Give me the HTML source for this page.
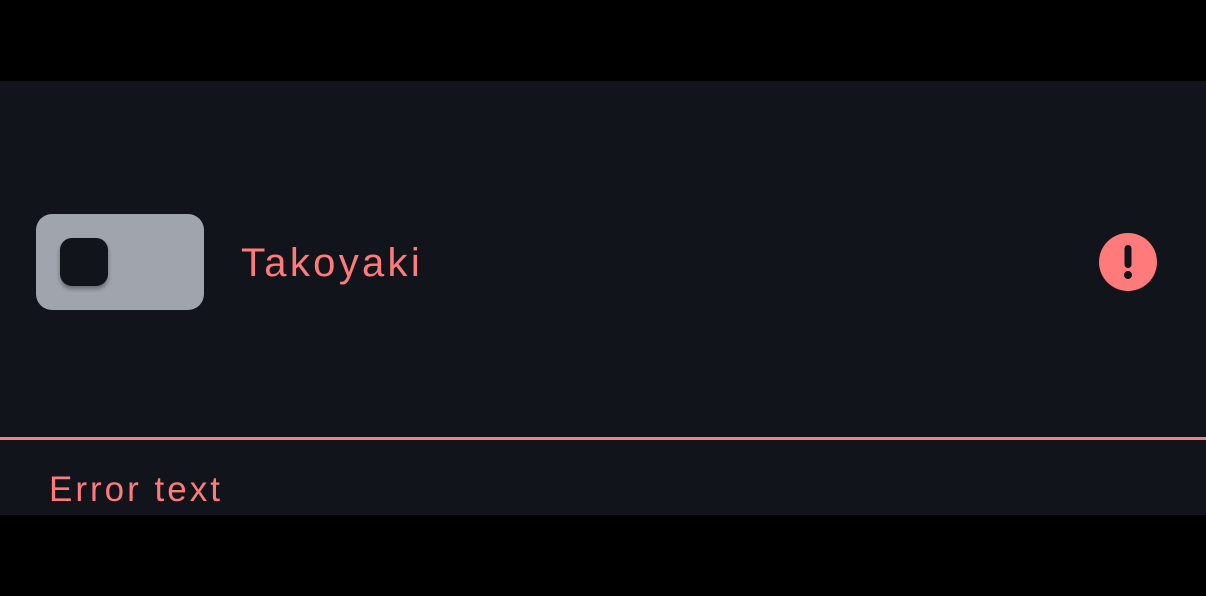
<!DOCTYPE html>
<html><head><meta charset="utf-8"><style>
html,body{margin:0;padding:0;background:#000;width:1206px;height:596px;overflow:hidden}
.panel{position:absolute;left:0;top:81px;width:1206px;height:434px;background:#11141b}
.track{position:absolute;left:36px;top:214px;width:168px;height:96px;border-radius:16px;background:#a0a4ac}
.thumb{position:absolute;left:60px;top:238px;width:48px;height:48px;border-radius:12px;background:#11141b;box-shadow:0 3px 4px rgba(0,0,0,.35)}
.t{position:absolute;font-family:"Liberation Sans",sans-serif;color:#ff7b7b;white-space:nowrap}
.line{position:absolute;left:0;top:437px;width:1206px;height:3px;background:#ff7b7b}
</style></head><body>
<div class="panel"></div>
<div class="track"></div>
<div class="thumb"></div>
<div class="t" style="left:241px;top:241px;font-size:40px;letter-spacing:3.3px">Takoyaki</div>
<svg style="position:absolute;left:1099px;top:233px" width="58" height="58" viewBox="0 0 58 58">
<circle cx="29" cy="29" r="29" fill="#ff7b7b"/>
<rect x="25.5" y="12" width="7" height="23" rx="3.5" fill="#11141b"/>
<circle cx="29" cy="42" r="4" fill="#11141b"/>
</svg>
<div class="line"></div>
<div class="t" style="left:49px;top:470px;font-size:35px;letter-spacing:3px">Error text</div>
</body></html>
